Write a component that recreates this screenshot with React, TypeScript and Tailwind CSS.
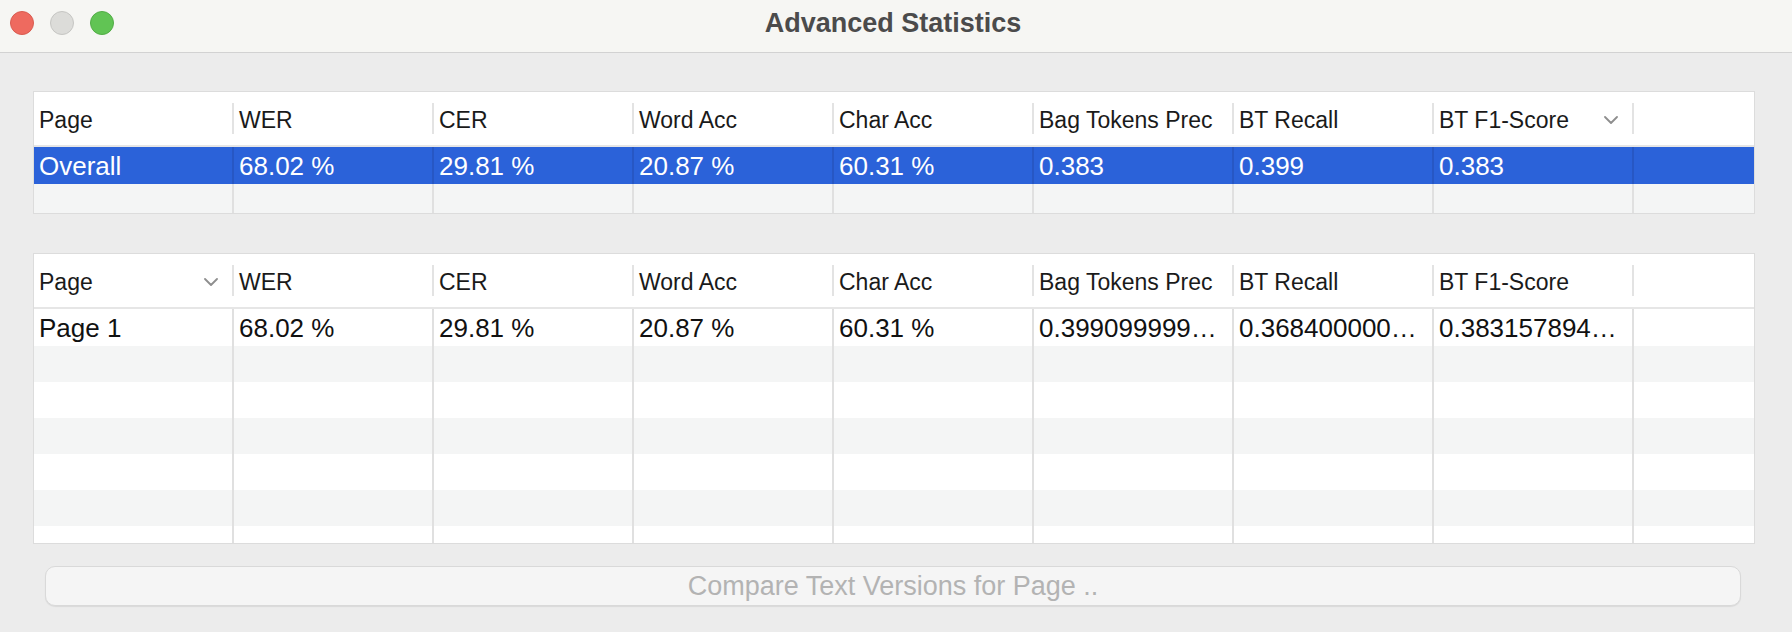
import React from 'react';

const COLUMNS = ['Page', 'WER', 'CER', 'Word Acc', 'Char Acc', 'Bag Tokens Prec', 'BT Recall', 'BT F1-Score'];

const OVERALL = ['Overall', '68.02 %', '29.81 %', '20.87 %', '60.31 %', '0.383', '0.399', '0.383'];
const PAGES = [['Page 1', '68.02 %', '29.81 %', '20.87 %', '60.31 %', '0.399099999…', '0.368400000…', '0.383157894…']];

function Chevron() {
  return (
    <svg width="14" height="8" viewBox="0 0 14 8" className="shrink-0 mr-[14px] mt-[3px]">
      <polyline points="1,1 7,7 13,1" fill="none" stroke="#8e8e8e" strokeWidth="1.8" strokeLinecap="round" strokeLinejoin="round" />
    </svg>
  );
}

function HeaderRow({ sortCol }: { sortCol: number }) {
  return (
    <div className="flex h-[55px] shrink-0 border-b-2 border-[#e6e6e6] bg-white">
      {COLUMNS.map((c, i) => (
        <div key={c} className="w-[200px] shrink-0 flex items-center">
          <span className="flex-1 pl-[5px] pt-[3px] text-[23px] leading-[28px] text-[#1a1a1a] truncate">{c}</span>
          {i === sortCol && <Chevron />}
          <div className="w-[2px] h-[31px] bg-[#e3e3e3] shrink-0" />
        </div>
      ))}
      <div className="flex-1" />
    </div>
  );
}

function DataRow({ cells, selected, shade, height }: { cells?: string[]; selected?: boolean; shade?: boolean; height: string }) {
  const bg = selected ? 'bg-[#2b62d9] text-white' : shade ? 'bg-[#f4f5f5] text-[#111]' : 'bg-white text-[#111]';
  const line = selected ? 'border-[#2757c4]' : 'border-[#e0e0e0]';
  return (
    <div className={`flex shrink-0 ${height} ${bg}`}>
      {COLUMNS.map((c, i) => (
        <div key={c} className={`w-[200px] shrink-0 border-r-2 ${line} pl-[5px] pr-[4px] flex items-center`}>
          <span className="text-[26px] leading-[32px] truncate">{cells ? cells[i] : ''}</span>
        </div>
      ))}
      <div className="flex-1" />
    </div>
  );
}

function StatsTable({
  sortCol,
  rows,
  selectedFirst,
  fillers,
  bodyHeight,
}: {
  sortCol: number;
  rows: string[][];
  selectedFirst?: boolean;
  fillers: number;
  bodyHeight: string;
}) {
  return (
    <div className="border border-[#dcdcdc] bg-white flex flex-col">
      <HeaderRow sortCol={sortCol} />
      <div className={`flex flex-col overflow-hidden ${bodyHeight}`}>
        {rows.map((r, i) => (
          <DataRow key={i} cells={r} selected={selectedFirst && i === 0} height="h-[37px]" />
        ))}
        {Array.from({ length: fillers }).map((_, i) => (
          <DataRow key={`f${i}`} shade={i % 2 === 0} height="h-[36px]" />
        ))}
      </div>
    </div>
  );
}

export default function App() {
  return (
    <div className="w-full h-[632px] bg-[#ececec] flex flex-col font-['Liberation_Sans',Arial,sans-serif] overflow-hidden">
      <header className="h-[53px] shrink-0 bg-[#f6f6f3] border-b border-[#d2d2d2] grid grid-cols-[1fr_auto_1fr] items-center pb-[6px]">
        <div className="flex items-center gap-[16px] pl-[10px]">
          <span className="w-[24px] h-[24px] rounded-full bg-[#ee6a5f] border border-[#d95c50]" />
          <span className="w-[24px] h-[24px] rounded-full bg-[#dcdcd9] border border-[#c6c6c3]" />
          <span className="w-[24px] h-[24px] rounded-full bg-[#61c454] border border-[#52ad46]" />
        </div>
        <h1 className="text-[27px] font-bold text-[#4b4b4b] leading-none pr-[6px]">Advanced Statistics</h1>
        <div />
      </header>

      <main className="flex flex-col pl-[33px] pr-[37px] pt-[38px]">
        <StatsTable sortCol={7} rows={[OVERALL]} selectedFirst fillers={1} bodyHeight="h-[66px]" />
        <div className="mt-[39px]">
          <StatsTable sortCol={0} rows={PAGES} fillers={6} bodyHeight="h-[234px]" />
        </div>
        <div className="mt-[22px] ml-[12px] mr-[14px]">
          <button
            disabled
            className="w-full h-[40px] rounded-[10px] bg-[#f5f5f5] border border-[#d9d9d9] shadow-[0_1px_1px_rgba(0,0,0,0.08)] text-[27px] text-[#b3b3b3] leading-[32px]"
          >
            Compare Text Versions for Page ..
          </button>
        </div>
      </main>
    </div>
  );
}
